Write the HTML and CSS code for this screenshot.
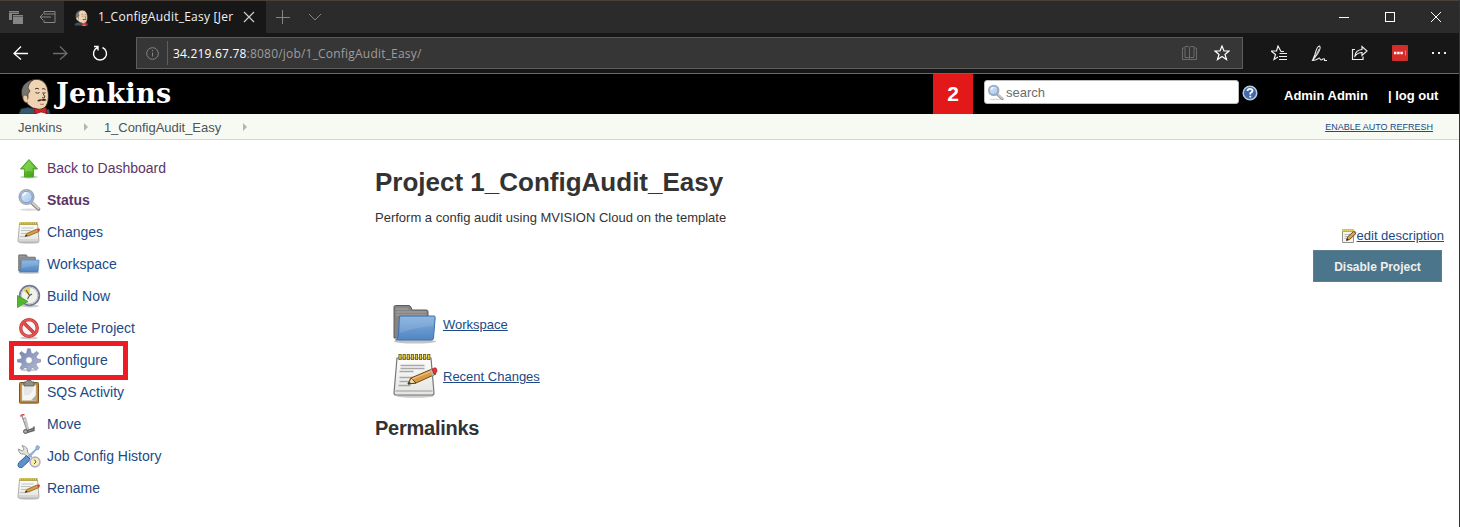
FILE: index.html
```html
<!DOCTYPE html>
<html lang="en">
<head>
<meta charset="utf-8">
<title>1_ConfigAudit_Easy [Jenkins]</title>
<link rel="stylesheet" href="styles.css">
</head>
<body>
<svg class="defs" width="0" height="0" aria-hidden="true">
  <defs>
    <linearGradient id="blue" x1="0" y1="0" x2="0" y2="1"><stop offset="0" stop-color="#82aedd"/><stop offset="1" stop-color="#5186c3"/></linearGradient>
    <linearGradient id="green" x1="0" y1="0" x2="1" y2="1"><stop offset="0" stop-color="#79d33a"/><stop offset="1" stop-color="#3a9c12"/></linearGradient>
    <linearGradient id="paper" x1="0" y1="0" x2="0" y2="1"><stop offset="0" stop-color="#fcfcfc"/><stop offset="1" stop-color="#e4e4e2"/></linearGradient>
    <linearGradient id="gear" x1="0" y1="0" x2="1" y2="1"><stop offset="0" stop-color="#6d7fb0"/><stop offset="1" stop-color="#b9bed6"/></linearGradient>
    <linearGradient id="glass" x1="0" y1="0" x2="1" y2="1"><stop offset="0" stop-color="#e6f0fc"/><stop offset="1" stop-color="#9dbfe8"/></linearGradient>
  </defs>
  <symbol id="butler" viewBox="0 0 34 36">
    <path d="M1 36 3 31 10 29.500 17 31 27 31 31 31.500 32 36z" fill="#35586b" stroke="#1d3542" stroke-width=".7"/>
    <path d="M17 30h10l1 6H18z" fill="#fff"/>
    <path d="M7 22C4 15 5 7 11 3.500 18-.5 26 1 29 9c2 7 2 14-1 19-3 4-10 4-14 1.500Q9 27 7 22z" fill="#efd3b3" stroke="#2d2420" stroke-width=".8"/>
    <path d="M5 21C2.500 15 3 9 8 5c2-2 5-3 7-3-3 2-4.500 5-5 8l2 3-2 3v5l-2 2z" fill="#77736e" stroke="#29241f" stroke-width=".6"/>
    <path d="M9 18c-4-3-5 2-3 5 1 2 3 2 4 1" fill="#edcaa6" stroke="#604a3a" stroke-width=".7"/>
    <path d="M17 11q2-1.500 4 0m3 0q2-1 3.500.5M17.500 14.500q2 1.500 4 0m3 .2q1.500 1 3 0M25 15.500l2 3.500q-1 1.300-3 .7" fill="none" stroke="#372720" stroke-width=".9"/>
    <path d="M19 23q2-2.500 4.500-1.500 3-1.500 5 .5-2 1.500-5 .6-2 1.400-4.500.4z" fill="#3b2b23"/>
    <path d="M22 26q2 1 4 0" fill="none" stroke="#b4745c"/>
    <path d="M16 30l6 2 6-2.500.7 6L23 34l-6 2z" fill="#da1e26" stroke="#7b1117" stroke-width=".7"/>
  </symbol>
  <symbol id="magnifier" viewBox="0 0 24 24">
    <ellipse cx="12" cy="21.700" rx="9" ry="1.200" fill="#ddd"/>
    <path d="m15 15 6.500 6" stroke="#858585" stroke-width="3.600" stroke-linecap="round"/>
    <path d="m15 14.500 6.500 6" stroke="#d0d0d0" stroke-width="2" stroke-linecap="round"/>
    <circle cx="9.500" cy="9" r="7.300" fill="url(#glass)" stroke="#a4a8ac" stroke-width="1.500"/>
    <circle cx="9.500" cy="9" r="5.800" fill="none" stroke="#7198cc"/>
    <path d="M5 8q1-4 5-4-1 3-5 4" fill="#fff" opacity=".8"/>
  </symbol>
  <symbol id="notepad" viewBox="0 0 48 48">
    <ellipse cx="24" cy="44" rx="19" ry="1.800" fill="#ccc"/>
    <path d="M6 6h34l3 35q0 2-2 2H5q-2 0-2-2z" fill="url(#paper)" stroke="#777" stroke-width="1.200"/>
    <path d="M4.500 39h37" stroke="#c0c0be" stroke-width="2"/>
    <path d="M9.500 13.500h24m-24 3h24m-25 3h14m-14 6h22m-22 4h16m-17 4h12" stroke="#a8a8a8" stroke-width="1.300"/>
    <path d="M7.500 5h32" stroke="#64580b" stroke-width="6" stroke-dasharray="3.100 1"/>
    <path d="M8.300 5h31" stroke="#e1ce3a" stroke-width="4.600" stroke-dasharray="1.500 2.600"/>
    <path d="M17 32l3-6 21-9 4 5-20 9z" fill="#d89a45" stroke="#704d16"/>
    <path d="M17 32l3-6 5 5z" fill="#f1dcaf" stroke="#57401d"/><path d="M17 32l1.500-2 1.500 1.300z" fill="#222"/>
    <path d="M21 27l20-8" stroke="#f2c983" stroke-width="1.300"/>
    <path d="M39 18l2 6 2-1-2-6z" fill="#b5b5b5"/><path d="M41 17l3-1.300q2 0 2 4l-3 2.300z" fill="#ea3038" stroke="#a71c23" stroke-width=".7"/>
  </symbol>
  <symbol id="notepad-small" viewBox="0 0 24 24">
    <ellipse cx="12" cy="22.700" rx="10" ry="1" fill="#ccc"/>
    <path d="M2.500 4h18l1.500 17q0 1-1 1H2q-1 0-1-1z" fill="url(#paper)" stroke="#999" stroke-width=".8"/>
    <path d="M2.500 3.500H21" stroke="#9b8d20" stroke-width="2.400"/><path d="M3 3.300h18" stroke="#e5d659" stroke-width="2" stroke-dasharray="1.200 .9"/>
    <path d="M4.500 8h12m-12.500 2.500h10m-10 3h6m-7 3h6" stroke="#c1c1c1"/><path d="M2 20h19" stroke="#c4c4c4"/>
    <path d="m8 16.500 1.800-3L20 9l2 2.500-10 4.300z" fill="#d99b45" stroke="#876023" stroke-width=".8"/><path d="m8 16.500 1.300-2 1.200 1.500z" fill="#333"/><path d="m20 9 2-.7q1 .7 1 2L21.500 11.500z" fill="#df3936"/>
  </symbol>
  <symbol id="edit-note" viewBox="0 0 16 16">
    <path d="M1.500 2.500h11v12h-11z" fill="#f4f4f2" stroke="#929292"/><path d="M1 2.500h12" stroke="#bba928" stroke-width="3"/><path d="M1.500 2.300H13" stroke="#f1e16c" stroke-width="2" stroke-dasharray="1.300 .7"/>
    <path d="M3.500 6.500h6m-6 2h4m-4 2h2" stroke="#bbb"/><path d="m5.500 12.500 1-3.500 6-5.500 2.500 2-6.500 6z" fill="#dda446" stroke="#5e4b26"/><path d="m5.500 12.500.6-2.200 1.500 1.500z" fill="#222"/><path d="m12.500 3.500 1-1 2 2-.7 1z" fill="#bd6546"/>
  </symbol>
  <symbol id="folder" viewBox="0 0 48 48">
    <ellipse cx="24" cy="41.500" rx="21" ry="2" fill="#c4c4c4"/>
    <path d="M3 38V7q0-1.500 1.500-1.500H18q2 0 3 4.500h14.500q1.500 0 1.500 1.500V38z" fill="#858585" stroke="#5b5b5b"/>
    <path d="M5 9h12M5 12h30M5 15h30" stroke="#a7a7a7"/>
    <path d="M8.500 16H43q1.300 0 1.200 1.500L42.500 38q-.1 2-2 2H4.500Q7 39 7.200 36z" fill="url(#blue)" stroke="#3f70aa"/>
    <path d="M9.500 17H43l-.7 9Q25 27 8.500 33z" fill="#fff" opacity=".12"/>
  </symbol>
  <symbol id="up" viewBox="0 0 24 24">
    <ellipse cx="12" cy="21" rx="9" ry="1.400" fill="#ccc"/>
    <path d="M12 3.500 20.500 13h-4v8h-9v-8h-4z" fill="url(#green)" stroke="#4da52a" stroke-linejoin="round"/>
    <path d="m12 5 6 7h-2.500v4q-4-2-8 0V12H6z" fill="#a6e77c" opacity=".4"/>
  </symbol>
  <symbol id="clock" viewBox="0 0 24 24">
    <ellipse cx="13" cy="22" rx="9" ry="1.500" fill="#ccc"/>
    <circle cx="12.500" cy="11.500" r="9.800" fill="#f1f2ec" stroke="#777991" stroke-width="1.800"/>
    <circle cx="12.500" cy="11.500" r="8.200" fill="none" stroke="#c1c3ce"/>
    <path d="M12.500 11.500 6.500 7q3-4 6.500-3.500z" fill="#e6d34e"/>
    <path d="m9 6 3.500 5.500 2.500-1.500m-2.500 1.500-2 3.500" fill="none" stroke="#555" stroke-width="1.100"/>
    <path d="M.5 11.500 11 17.500.5 23.500z" fill="#51b82d" stroke="#419729" stroke-width=".8"/>
  </symbol>
  <symbol id="ban" viewBox="0 0 24 24">
    <ellipse cx="12" cy="22" rx="9" ry="1.300" fill="#ccc"/><circle cx="12" cy="12" r="8.300" fill="#f8f8f8" stroke="#c33232" stroke-width="3.300"/><path d="m6 6 12 12" stroke="#c33232" stroke-width="3.600"/>
    <circle cx="12" cy="12" r="8.300" fill="none" stroke="#e35858" stroke-width="1.900"/><path d="m6 6 12 12" stroke="#e24b4b" stroke-width="2.200"/>
  </symbol>
  <symbol id="gearicon" viewBox="0 0 24 24">
    <ellipse cx="12" cy="22" rx="8" ry="1.300" fill="#ccc"/>
    <path fill-rule="evenodd" d="M10.500.8h2.800l.9 4.400 2 .8 3.600-2.600 1.800 1.900-2.500 3.500.8 2 3.600.8v2.400l-3.700.8-.9 2 2.400 3.500-1.900 1.700-3.500-2.400-2 .8-.8 2.800h-2.200l-.8-3-2-.8-3.500 2.400-1.700-1.700 2.300-3.600-.8-2L.4 14v-2.400l3.800-.7.8-2L2.600 5.300l1.800-1.800L8 6l1.700-.8zM12 8.800a3.400 3.400 0 1 0 0 6.800 3.400 3.400 0 0 0 0-6.800z" fill="url(#gear)" stroke="#818ba8" stroke-width=".7"/>
  </symbol>
  <symbol id="clipboard" viewBox="0 0 24 24">
    <ellipse cx="12" cy="23" rx="11" ry="1" fill="#ccc"/><rect x="2.500" y="2.500" width="19" height="20.500" rx="1" fill="#bd883b" stroke="#80551b"/>
    <path d="M5 5h14v15.500H5z" fill="#f5f5f3" stroke="#ccc" stroke-width=".6"/><path d="M7 8h9m-9 2h9m-9 2h8m-8 2h6" stroke="#d7d7d7"/><path d="M14 20.500 19 15v5.500z" fill="#aaa"/>
    <path d="M7 2h2l1-1.500h4L15 2h2v4H7z" fill="#8e918a" stroke="#555950" stroke-width=".8"/>
  </symbol>
  <symbol id="truck" viewBox="0 0 24 24">
    <path d="M5 4l5 14M6 7l3-1M7 11l3-1" fill="none" stroke="#999" stroke-width="1.400"/><path d="M8 5l3.500 13" stroke="#c5c5c5" stroke-width="2"/>
    <path d="M3.500 4.500q1-2.500 4-1.500" fill="none" stroke="#dd4053" stroke-width="1.500"/><path d="m9 19 8-2.500v-2m0 2v2L10 20.500" fill="#bbb" stroke="#666" stroke-width="1.500"/><circle cx="8.500" cy="19.500" r="2" fill="#aaa" stroke="#555"/>
  </symbol>
  <symbol id="tools" viewBox="0 0 24 24">
    <path d="M5 1.500 7 5 5.500 7 1.500 5q0 6 6 5L18 21q3 1 2-2L10.500 8q1-5-5.500-6.500z" fill="#e2e3e1" stroke="#999c97"/>
    <path d="m11 12 8-7V2.500l2-1 1.500 1.500-1 2.500-2.500.5-7 8" fill="#9dbce0" stroke="#6e96c3" stroke-width=".8"/>
    <path d="m9.500 11.500 4 4-8 7.500Q2 25 1 21.500L1.500 19z" fill="#5f90ca" stroke="#315d99"/>
    <circle cx="18" cy="18" r="4.900" fill="#f4f0b4" stroke="#b8a9cf" stroke-width="1.700"/><path d="m17.500 15.500 1.500 2.500-2 2" fill="none" stroke="#555"/>
  </symbol>
</svg>

<div class="window">
  <header class="tabs">
    <div class="tab-tools">
      <svg width="16" height="16" viewBox="0 0 16 16"><path d="M1 2h10v3H4v6H1zM5 6h10v9H5z" fill="#858585"/><path d="M1 3.500h10M5 7.500h10" stroke="#5b5b5b"/></svg>
      <svg width="17" height="14" viewBox="0 0 17 14"><path d="M5 4V1.500h11v11H5V10M5 4h11M12 7H1m3-3L1 7l3 3" fill="none" stroke="#858585"/></svg>
    </div>
    <div class="tab"><svg class="favicon" width="15" height="17"><use href="#butler"/></svg><span>1_ConfigAudit_Easy [Jer</span><svg class="close" width="12" height="12"><path d="m1 1 10 10M11 1 1 11" stroke="#ccc" stroke-width="1.200"/></svg></div>
    <svg class="newtab" width="14" height="14"><path d="M6.500 0v14M0 7.500h14" stroke="#858585"/></svg>
    <svg class="chevron" width="14" height="8"><path d="m1 1 6 6 6-6" fill="none" stroke="#858585"/></svg>
    <div class="controls">
      <svg width="12" height="12"><path d="M1 6.500h10" stroke="#fff"/></svg>
      <svg width="12" height="12"><rect x="1.500" y="1.500" width="9" height="9" fill="none" stroke="#fff"/></svg>
      <svg width="12" height="12"><path d="m1 1 10 10M11 1 1 11" stroke="#fff"/></svg>
    </div>
  </header>
  <nav class="toolbar">
    <div class="history">
      <svg width="17" height="16" fill="none" stroke="#fff" stroke-width="1.300"><path d="M16 8.500H2m7-7-7 7 7 6"/></svg>
      <svg width="17" height="16" fill="none" stroke="#6b6b6b" stroke-width="1.300"><path d="M1 8.500h14M8 1.500l7 7-7 6"/></svg>
      <svg width="17" height="17" fill="none" stroke="#fff" stroke-width="1.400"><path d="M5.500 2.500A6.500 6.500 0 1 0 10.500 2.500M2 1.500h4v4"/></svg>
    </div>
    <div class="address">
      <svg class="info" width="14" height="14" fill="none" stroke="#858585"><circle cx="6.500" cy="7.500" r="5.800"/><path d="M6.500 6.500v4M6.500 4v1.200"/></svg>
      <span class="url"><b>34.219.67.78</b>:8080/job/1_ConfigAudit_Easy/</span>
      <svg class="book" width="15" height="14" fill="none" stroke="#6b6b6b"><path d="M3 .5h3.500l1 1 1-1H12v11H8.500l-1 1-1-1H3zM7.500 1v11M2.500 2H.5v11.500h14V2h-2"/></svg>
      <svg width="16" height="16" fill="none" stroke="#fff" stroke-width="1.200"><path d="m8 1 2 5h5l-4 3.500 1.500 5L8 11.500l-4.500 3 1.500-5L1 6h5z"/></svg>
    </div>
    <div class="actions">
      <svg width="16" height="16" fill="none" stroke="#eee" stroke-width="1.200"><path d="M13 6.500h-3L7 1 5.500 6H0l4.500 3.500-1.500 5L7 12M8.500 8.500H16M8 11.500h8M8 14.500h8"/></svg>
      <svg width="17" height="17" fill="none" stroke="#eee" stroke-width="1.100"><path d="M1.500 15.500 4 9.500Q6 1 8.500 1q2 1.500-2 8l-5 6.500q3 0 6-2c2-1.500 1 1.500 2.500 1.500s2-2 3.500-1v1.500H16"/><path d="m3.500 13 4.500-9" stroke-width=".8"/></svg>
      <svg width="17" height="16" fill="none" stroke="#eee" stroke-width="1.200"><path d="M4 4.500H1.500v10H12v-3M4 11q.5-6 7-6.500V1.500l5 4.500-5 4.500V7.500q-4 0-7 3.500z"/></svg>
      <svg width="16" height="16"><rect width="16" height="16" rx="1" fill="#d32d2a"/><path d="M2 8h9" stroke="#fff" stroke-width="2.400" stroke-dasharray="2.400 .8"/><path d="M13.500 5.500v5" stroke="#e78885"/></svg>
      <svg width="16" height="16"><path d="M1 7h2v2H1zM7 7h2v2H7zM13 7h2v2h-2z" fill="#eee"/></svg>
    </div>
  </nav>

  <div class="jenkins-header">
    <svg class="mascot" width="34" height="36"><use href="#butler"/></svg>
    <div class="wordmark">Jenkins</div>
    <div class="alerts">2</div>
    <div class="search"><svg width="17" height="17"><use href="#magnifier"/></svg><span>search</span></div>
    <svg class="help" width="16" height="16"><circle cx="8" cy="8" r="6.800" fill="#426aa9" stroke="#b6cae3" stroke-width="1.500"/><path d="M5.500 6Q5.700 3.800 8 3.800t2.500 2Q10.500 7 8.300 8.200V9.500M8.300 10.800v1.700" fill="none" stroke="#fff" stroke-width="1.800"/></svg>
    <span class="user">Admin Admin</span><span class="logout">| log out</span>
  </div>
  <div class="crumbs"><span>Jenkins</span><i></i><span>1_ConfigAudit_Easy</span><i></i><a class="refresh">ENABLE AUTO REFRESH</a></div>

  <div class="page">
    <aside>
      <a class="task visited"><svg><use href="#up"/></svg><span>Back to Dashboard</span></a>
      <a class="task visited current"><svg><use href="#magnifier"/></svg><span>Status</span></a>
      <a class="task"><svg><use href="#notepad-small"/></svg><span>Changes</span></a>
      <a class="task"><svg><use href="#folder"/></svg><span>Workspace</span></a>
      <a class="task"><svg><use href="#clock"/></svg><span>Build Now</span></a>
      <a class="task"><svg><use href="#ban"/></svg><span>Delete Project</span></a>
      <a class="task marked"><svg><use href="#gearicon"/></svg><span>Configure</span></a>
      <a class="task"><svg><use href="#clipboard"/></svg><span>SQS Activity</span></a>
      <a class="task"><svg><use href="#truck"/></svg><span>Move</span></a>
      <a class="task"><svg><use href="#tools"/></svg><span>Job Config History</span></a>
      <a class="task"><svg><use href="#notepad-small"/></svg><span>Rename</span></a>
    </aside>
    <main>
      <h1>Project 1_ConfigAudit_Easy</h1>
      <p class="description">Perform a config audit using MVISION Cloud on the template</p>
      <div class="edit"><svg width="16" height="16"><use href="#edit-note"/></svg><a>edit description</a></div>
      <button>Disable Project</button>
      <div class="link"><svg><use href="#folder"/></svg><a>Workspace</a></div>
      <div class="link"><svg><use href="#notepad"/></svg><a>Recent Changes</a></div>
      <h2>Permalinks</h2>
    </main>
  </div>
</div>
</body>
</html>
```
FILE: styles.css
```css
*, *::after { box-sizing: border-box; }
body { margin: 0; background: #333; font: 13px/16px "Liberation Sans", Arial, sans-serif; color: #333; }
svg { display: block; flex: none; }
.defs { position: absolute; }
span, a { white-space: nowrap; }
.window { width: 1459px; height: 527px; overflow: hidden; background: #fff; }

.tabs { height: 33px; display: flex; align-items: center; background: #2b2b2b; border-top: 1px solid #4a4037; }
.tab-tools { width: 64px; padding-left: 8px; display: flex; align-items: center; gap: 15px; }
.tab { width: 202px; height: 32px; padding-left: 10px; display: flex; align-items: center; background: #171717; color: #f2f2f2; font: 12px/16px "Open Sans", sans-serif; }
.tab span { margin-left: 9px; width: 136px; letter-spacing: 0.25px; }
.close { margin-left: 9px; }
.newtab { margin-left: 10px; }
.chevron { margin-left: 18px; }
.controls { margin-left: auto; padding-right: 17px; display: flex; gap: 34px; }

.toolbar { height: 41px; display: flex; align-items: center; background: #171717; border-bottom: 1px solid #696969; }
.history { width: 136px; padding-left: 12px; display: flex; align-items: center; gap: 23px; }
.address { width: 1107px; height: 32px; padding: 0 12px 0 9px; display: flex; align-items: center; background: #363636; border: 1px solid #5d5d5d; }
.url { margin-left: 7px; padding-left: 5px; height: 24px; border-left: 1px solid #5d5d5d; color: #9d9d9d; font: 12px/25px "Open Sans", sans-serif; letter-spacing: 0.2px; }
.url b { color: #fff; font-weight: 400; }
.book { margin-left: auto; margin-right: 17px; }
.actions { padding-left: 28px; display: flex; align-items: center; gap: 23.5px; }

.jenkins-header { height: 40px; display: flex; align-items: center; background: #000; color: #fff; font-weight: 700; }
.mascot { margin-left: 18px; align-self: flex-end; }
.wordmark { width: 120px; margin-left: 4px; font: bold 27px/36px "DejaVu Serif", serif; letter-spacing: 0.3px; }
.alerts { margin-left: 757px; width: 40px; height: 40px; background: #e31818; font-size: 21px; line-height: 40px; text-align: center; }
.search { width: 255px; height: 24px; margin: -4px 0 0 11px; padding-left: 2px; display: flex; align-items: center; gap: 2px; background: #fff; border: 1px solid #bbb; border-radius: 3px; color: #6d6d6d; font-weight: 400; }
.search span { padding-top: 2px; }
.help { margin: -2px 0 0 3px; }
.user { margin-left: 26px; padding-top: 3px; }
.logout { margin-left: 20px; padding-top: 3px; }
.user, .logout { font-size: 13px; letter-spacing: -0.01px; }

.crumbs { height: 26px; padding: 0 26px 0 18px; display: flex; align-items: center; background: #f6faf2; border-bottom: 1px solid #d3d7cf; color: #4d545d; }
.crumbs span { padding-top: 2px; letter-spacing: -0.03px; }
.crumbs i { margin: 0 16px 0 22px; border-left: 4px solid #b2b6ae; border-top: 4px solid transparent; border-bottom: 4px solid transparent; }
.refresh { margin-left: auto; font-size: 9px; color: #204a87; text-decoration: underline; }

.page { display: flex; }
aside { width: 360px; padding: 12px 0 0 17px; }
.task { position: relative; width: 160px; height: 32px; display: flex; align-items: center; gap: 6px; color: #204a87; font-size: 14px; }
.task svg { width: 24px; height: 24px; }
.visited { color: #5c3566; }
.current { font-weight: 700; }
.marked::after { content: ""; position: absolute; left: -8px; top: -3px; width: 119px; height: 39px; border: 5px solid #ed1c24; }
main { width: 1099px; padding: 26px 15px 0; }
h1 { margin: 0; font-size: 26px; line-height: 32px; }
.description { margin: 12px 0 0; }
.edit { display: flex; justify-content: flex-end; margin-top: 2px; }
.edit a, .link a { color: #204a87; text-decoration: underline; }
button { display: block; width: 129px; height: 32px; margin: 6px 2px 0 auto; padding: 2px 0 0; background: #4b758b; border: 1px solid #5b8094; color: #eee; font: bold 12px "Liberation Sans", Arial, sans-serif; }
.link { display: flex; align-items: center; gap: 4px; height: 48px; margin: 4px 0 0 16px; }
.link a { padding-top: 2px; }
button + .link { margin-top: 18px; }
.link svg { width: 48px; height: 48px; }
h2 { margin: 16px 0 0; font-size: 20px; line-height: 24px; letter-spacing: -0.25px; }
```
